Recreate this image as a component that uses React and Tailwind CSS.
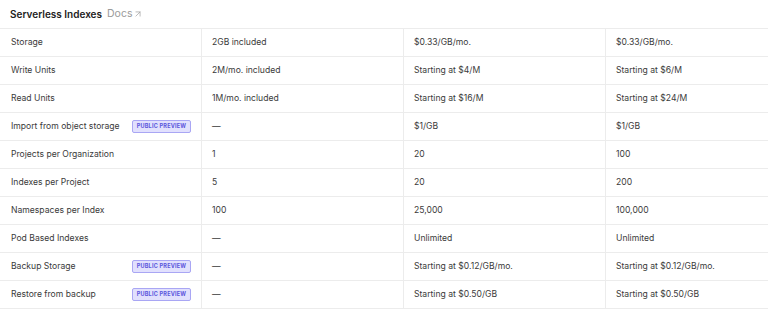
import { ArrowUpRight } from 'lucide-react'

const rows = [
  { name: 'Storage', cells: ['2GB included', '$0.33/GB/mo.', '$0.33/GB/mo.'] },
  { name: 'Write Units', cells: ['2M/mo. included', 'Starting at $4/M', 'Starting at $6/M'] },
  { name: 'Read Units', cells: ['1M/mo. included', 'Starting at $16/M', 'Starting at $24/M'] },
  { name: 'Import from object storage', preview: true, cells: ['—', '$1/GB', '$1/GB'] },
  { name: 'Projects per Organization', cells: ['1', '20', '100'] },
  { name: 'Indexes per Project', cells: ['5', '20', '200'] },
  { name: 'Namespaces per Index', cells: ['100', '25,000', '100,000'] },
  { name: 'Pod Based Indexes', cells: ['—', 'Unlimited', 'Unlimited'] },
  { name: 'Backup Storage', preview: true, cells: ['—', 'Starting at $0.12/GB/mo.', 'Starting at $0.12/GB/mo.'] },
  { name: 'Restore from backup', preview: true, cells: ['—', 'Starting at $0.50/GB', 'Starting at $0.50/GB'] },
]

function Badge() {
  return (
    <span className="flex h-[13px] w-[59px] items-center justify-center rounded-[2px] border border-[#a9a6f4] bg-[#e1e0fd] text-[5.5px] font-bold tracking-[0.04em] text-[#5a55dc]">
      PUBLIC PREVIEW
    </span>
  )
}

export default function App() {
  return (
    <div className="h-[309px] w-[768px] overflow-hidden bg-white font-['Inter',sans-serif] text-[#3a3a3a]">
      <div className="flex h-[29px] items-center gap-[5px] border-b border-[#ececec] px-[10px]">
        <span className="text-[10px] font-semibold text-[#222]">Serverless Indexes</span>
        <span className="flex items-center text-[10.5px] text-[#9a9a9a]">
          Docs
          <ArrowUpRight className="ml-[1px] h-[10px] w-[10px]" strokeWidth={1.6} />
        </span>
      </div>
      {rows.map(row => (
        <div
          key={row.name}
          className="grid h-[28px] grid-cols-[202px_202px_202px_202px] border-b border-[#ececec] text-[8.6px]"
        >
          <div className="flex items-center justify-between border-r border-[#ececec] pl-[11px] pr-[10px]">
            <span>{row.name}</span>
            {row.preview && <Badge />}
          </div>
          {row.cells.map((cell, i) => (
            <div
              key={i}
              className={`flex items-center pl-[10px] ${i < 2 ? 'border-r border-[#ececec]' : ''}`}
            >
              {cell}
            </div>
          ))}
        </div>
      ))}
    </div>
  )
}
